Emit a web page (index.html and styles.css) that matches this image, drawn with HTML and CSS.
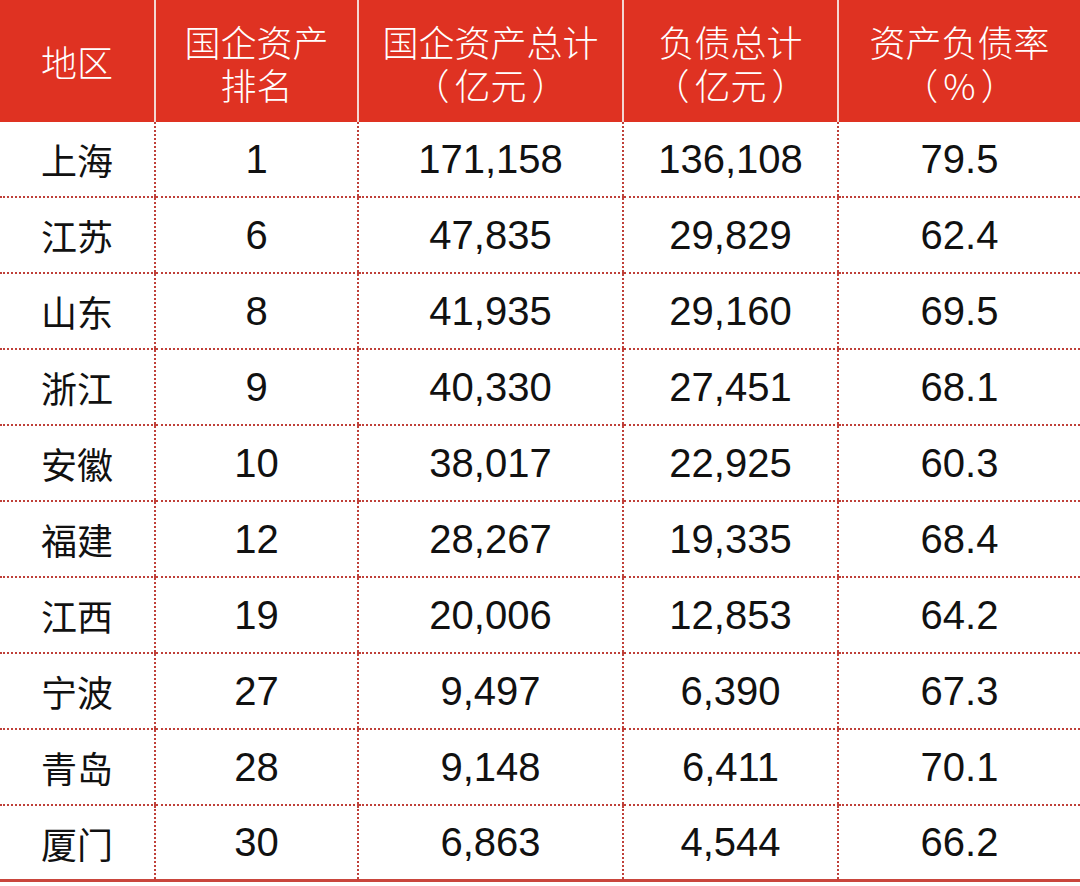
FILE: index.html
```html
<!DOCTYPE html>
<html lang="zh">
<head>
<meta charset="utf-8">
<link rel="stylesheet" href="styles.css">
</head>
<body>
<table class="data">
  <colgroup>
    <col class="c0"><col class="c1"><col class="c2"><col class="c3"><col class="c4">
  </colgroup>
  <thead>
    <tr>
      <th class="single"><span class="hl">地区</span></th>
      <th><span class="hl">国企资产</span><span class="hl">排名</span></th>
      <th><span class="hl">国企资产总计</span><span class="hl"><span class="po">（</span>亿元<span class="pc">）</span></span></th>
      <th><span class="hl">负债总计</span><span class="hl"><span class="po">（</span>亿元<span class="pc">）</span></span></th>
      <th><span class="hl">资产负债率</span><span class="hl"><span class="po">（</span>%<span class="pc">）</span></span></th>
    </tr>
  </thead>
  <tbody>
    <tr><td class="cn">上海</td><td>1</td><td>171,158</td><td>136,108</td><td>79.5</td></tr>
    <tr><td class="cn">江苏</td><td>6</td><td>47,835</td><td>29,829</td><td>62.4</td></tr>
    <tr><td class="cn">山东</td><td>8</td><td>41,935</td><td>29,160</td><td>69.5</td></tr>
    <tr><td class="cn">浙江</td><td>9</td><td>40,330</td><td>27,451</td><td>68.1</td></tr>
    <tr><td class="cn">安徽</td><td>10</td><td>38,017</td><td>22,925</td><td>60.3</td></tr>
    <tr><td class="cn">福建</td><td>12</td><td>28,267</td><td>19,335</td><td>68.4</td></tr>
    <tr><td class="cn">江西</td><td>19</td><td>20,006</td><td>12,853</td><td>64.2</td></tr>
    <tr><td class="cn">宁波</td><td>27</td><td>9,497</td><td>6,390</td><td>67.3</td></tr>
    <tr><td class="cn">青岛</td><td>28</td><td>9,148</td><td>6,411</td><td>70.1</td></tr>
    <tr class="last"><td class="cn">厦门</td><td>30</td><td>6,863</td><td>4,544</td><td>66.2</td></tr>
  </tbody>
</table>
</body>
</html>
```
FILE: styles.css
```css
html, body {
  margin: 0;
  padding: 0;
  background: #ffffff;
}
.data {
  width: 1080px;
  border-collapse: collapse;
  table-layout: fixed;
  font-family: "Liberation Sans", "Noto Sans CJK SC", sans-serif;
}
.c0 { width: 155px; }
.c1 { width: 203px; }
.c2 { width: 265px; }
.c3 { width: 215px; }
.c4 { width: 242px; }

.data th {
  background: #df3222;
  color: #ffffff;
  height: 122px;
  padding: 4px 0 0 0;
  box-sizing: border-box;
  font-weight: 300;
  font-size: 36px;
  text-align: center;
  vertical-align: middle;
  font-family: "Noto Sans CJK SC", sans-serif;
  border-left: 2px solid #f4d6d2;
}
.data th.single {
  padding-top: 0;
}
.data th:first-child { border-left: none; }
.hl {
  display: block;
  height: 43px;
  line-height: 43px;
  white-space: nowrap;
}
.po { margin-right: 5px; }
.pc { margin-left: 5px; }

.data td {
  height: 74px;
  padding: 0;
  text-align: center;
  vertical-align: middle;
  font-size: 40px;
  color: #111111;
  border-bottom: 2px dotted #bf4039;
  border-left: 2px dotted #bf4039;
}
.data td:first-child { border-left: none; }
.data td.cn {
  font-family: "Noto Sans CJK SC", sans-serif;
  font-size: 36px;
}
.data tr.last td {
  border-bottom: 3px solid #c9463d;
  height: 73px;
}
```
